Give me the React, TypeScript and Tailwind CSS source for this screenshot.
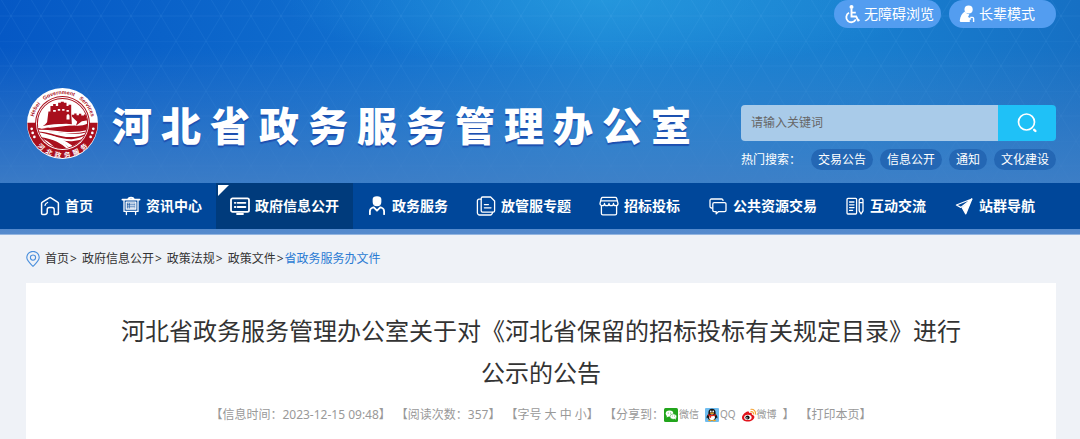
import React from 'react';

const strokeProps = {
    fill: 'none',
    stroke: 'currentColor',
    strokeWidth: 1.3,
    strokeLinecap: 'round' as const,
    strokeLinejoin: 'round' as const,
};

const NavIcon: React.FC<{ children: React.ReactNode }> = ({ children }) => (
    <svg viewBox="0 0 20 20" className="w-5 h-5 shrink-0" aria-hidden="true" {...strokeProps}>
        {children}
    </svg>
);

const HomeIcon = () => (
    <NavIcon>
        <path d="M5 18.4H2.6a1 1 0 0 1-1-1V7.6a1.6 1.6 0 0 1 .8-1.4l6.8-4.4a1.6 1.6 0 0 1 1.7 0l6.7 4.4a1.6 1.6 0 0 1 .8 1.4v9.8a1 1 0 0 1-1 1h-3.2v-4.6a2.2 2.2 0 0 0-2.2-2.2H9.4a2.2 2.2 0 0 0-2.2 2.2v2.4a2.2 2.2 0 0 1-2.2 2.2z" strokeWidth="1.5" />
        <path d="M5 9.4c.2-1.6 1-2.2 2.6-2.9" />
    </NavIcon>
);

const BoardIcon = () => (
    <NavIcon>
        <path d="M1.4 3.6h17.2M7.2 3.6c0-1.2.8-2 2.8-2s2.8.8 2.8 2" strokeWidth="1.8" />
        <path d="M3 4v11.4h14V4M5.2 6.2v7h9.6v-7z" />
        <path d="M7 7.8h.4M9 7.8h4.4M7 9.9h.4M9 9.9h4.4M7 12h.4M9 12h4.4M5.4 15.6v3M14.6 15.6v3" />
    </NavIcon>
);

const ScreenIcon = () => (
    <NavIcon>
        <rect x="1" y="2.4" width="18" height="13.4" rx="1.6" strokeWidth="1.8" />
        <path d="M4.8 6.8h.6M7.6 6.8h7.8M4.8 11h.6M7.6 11h7.8M7 18h6" strokeWidth="1.8" />
    </NavIcon>
);

const PersonIcon = () => (
    <NavIcon>
        <path d="M6.3 3.2c0-1.4 1-2 3.7-2.2 2.7.2 3.7.8 3.7 2.2V6c0 2.2-1.7 3.6-3.7 3.6S6.3 8.2 6.3 6z" fill="currentColor" />
        <path d="M2.9 18.2v-2.9c0-2 .8-3.2 3-3.8l.9-.2 3.2 3.4 3.2-3.4.9.2c2.2.6 3 1.8 3 3.8v2.9" strokeWidth="1.8" />
    </NavIcon>
);

const PagesIcon = () => (
    <NavIcon>
        <path d="M5.2 2.4v12.4a1.4 1.4 0 0 0 1.4 1.4h10.6a1.4 1.4 0 0 0 1.4-1.4V5l-4-4H6.6a1.4 1.4 0 0 0-1.4 1.4z" />
        <path d="M5 3.2H3a1.6 1.6 0 0 0-1.6 1.6v12A2.2 2.2 0 0 0 3.6 19h10.8c1 0 1.8-.8 2.2-2.6M8.4 8.6h4M8.4 11.8h6.6" />
    </NavIcon>
);

const ShopIcon = () => (
    <NavIcon>
        <path d="M3.6 1.4h12.8c.6 0 1 .3 1.2.8L19 7.4c0 1.4-1.1 2.3-2.3 2.3s-2.2-.9-2.2-2.3c0 1.4-1 2.3-2.25 2.3S10 8.8 10 7.4c0 1.4-1 2.3-2.25 2.3S5.5 8.8 5.5 7.4c0 1.4-1 2.3-2.2 2.3S1 8.8 1 7.4l1.4-5.2c.2-.5.6-.8 1.2-.8z" />
        <path d="M2.2 4.8h15.6M2.4 9.6v7.8a1.4 1.4 0 0 0 1.4 1.4h12.4a1.4 1.4 0 0 0 1.4-1.4V9.6" />
    </NavIcon>
);

const ChatIcon = () => (
    <NavIcon>
        <path d="M4 12h-.6A1.4 1.4 0 0 1 2 10.6V4.4A1.4 1.4 0 0 1 3.4 3h10.2A1.4 1.4 0 0 1 15 4.4" />
        <path d="M6.2 6.6h10.4A1.4 1.4 0 0 1 18 8v6.2a1.4 1.4 0 0 1-1.4 1.4h-6l-2.4 2.2v-2.2h-2a1.4 1.4 0 0 1-1.4-1.4V8a1.4 1.4 0 0 1 1.4-1.4z" />
    </NavIcon>
);

const NoteIcon = () => (
    <NavIcon>
        <rect x="2" y="2.4" width="9.6" height="15.6" rx="1" />
        <path d="M4.6 6H9M4.6 8.8H9M4.6 11.6H9M4.6 14.4h3M14.2 4.4a1.9 1.9 0 0 1 3.8 0v10.4L16.1 18l-1.9-3.2zM14.2 6.6H18" />
    </NavIcon>
);

const PlaneIcon = () => (
    <NavIcon>
        <path d="M17.8 3 2.4 9l4.4 2.4z" strokeWidth="1.2" />
        <path d="M17.8 3 8.4 12l3.4 5.8z" fill="currentColor" />
    </NavIcon>
);

const NAV_ITEMS = [
    { label: '首页', icon: <HomeIcon /> },
    { label: '资讯中心', icon: <BoardIcon /> },
    { label: '政府信息公开', icon: <ScreenIcon />, active: true },
    { label: '政务服务', icon: <PersonIcon /> },
    { label: '放管服专题', icon: <PagesIcon /> },
    { label: '招标投标', icon: <ShopIcon /> },
    { label: '公共资源交易', icon: <ChatIcon /> },
    { label: '互动交流', icon: <NoteIcon /> },
    { label: '站群导航', icon: <PlaneIcon /> },
];

const SITE_NAME = '河北省政务服务管理办公室';
const HOT_WORDS = ['交易公告', '信息公开', '通知', '文化建设'];
const CRUMBS = ['首页', '政府信息公开', '政策法规', '政策文件'];

// Round emblem: Great Wall tower inside a half white, half red ring
const Emblem = () => (
    <svg viewBox="0 0 212 212" className="w-[71px] h-[71px] shrink-0" role="img" aria-label="河北政务服务">
        <defs>
            <clipPath id="emblem-inner">
                <circle cx="106" cy="106" r="74" />
            </clipPath>
            <path id="emblem-top" d="M18 106a88 88 0 0 1 176 0" />
            <path id="emblem-bottom" d="M4 106a102 102 0 0 0 204 0" />
        </defs>
        <circle cx="106" cy="106" r="106" fill="#fff" />
        <path d="M1 104h210a105 105 0 0 1-210 0z" fill="#a90f1d" />
        <circle cx="106" cy="106" r="82" fill="#a90f1d" />
        <circle cx="106" cy="106" r="79" fill="#fff" />
        <circle cx="106" cy="106" r="75" fill="none" stroke="#a90f1d" strokeWidth="3" />
        <g clipPath="url(#emblem-inner)">
            <path
                d="M70 54h8v-6h8v6h7v-10h8v-3h9v3h8v10h6v-4h8v26l2 32c-22-4-46 0-70 10l-36 6c14-6 26-14 32-22l4-32h6z"
                fill="#a90f1d"
            />
            <path d="M134 80h7v-4h7v5h7v-4h7v5h8v-3h20v16l-26 4-18 14 4-12-8-8-8-8z" fill="#a90f1d" />
            <path d="M26 120c40 2 92-10 116-8 14 2 30 0 46-10v26c-30 14-64 8-92 4-28-4-50-4-70-2z" fill="#a90f1d" />
            <path d="M30 118c36-10 70-14 112-6-30-2-64 2-98 10z" fill="#fff" />
            <path d="M26 130c36 0 58 12 90 16 26 2 48-2 70-14l-8 26-34 22c-30-28-72-42-118-44z" fill="#a90f1d" />
            <path d="M30 144c46 4 82 18 108 44H88c-8-18-30-34-58-44z" fill="#a90f1d" />
            <path d="M34 136c34 2 60 22 100 20 20-2 36-8 50-16" fill="none" stroke="#fff" strokeWidth="6" />
            <path d="M34 127c42-4 86 16 148 0" fill="none" stroke="#fff" strokeWidth="4" />
            <path d="M38 143c44 6 66 18 92 44" fill="none" stroke="#fff" strokeWidth="6" />
        </g>
        <g fill="#fff">
            <path d="M78 66h8v5h-8zM92 63h7v5h-7zM105 63h7v5h-7zM118 66h7v5h-7zM118 84c0-7 9-7 9 0v10h-9z" />
            <circle cx="14" cy="122" r="4" />
            <circle cx="17" cy="134" r="4" />
            <circle cx="22" cy="146" r="4" />
            <circle cx="198" cy="122" r="4" />
            <circle cx="195" cy="134" r="4" />
            <circle cx="190" cy="146" r="4" />
        </g>
        <text fill="#a90f1d" fontSize="16" fontWeight="700" fontFamily="'Liberation Sans', sans-serif" textAnchor="middle">
            <textPath href="#emblem-top" startOffset="50%">Hebei&#8195;Government&#8195;Services</textPath>
        </text>
        <text fill="#fff" fontSize="20" fontWeight="700" fontFamily="'Noto Sans CJK SC', sans-serif" textAnchor="middle">
            <textPath href="#emblem-bottom" startOffset="50%">河&#8194;北&#8194;政&#8194;务&#8194;服&#8194;务</textPath>
        </text>
    </svg>
);

const HeaderBackdrop = () => (
    <svg className="absolute inset-0 w-full h-full" aria-hidden="true">
        <defs>
            <linearGradient id="base" x1="0" y1="0" x2="1" y2="0">
                <stop offset="0" stopColor="#0558c5" />
                <stop offset="0.3" stopColor="#0f6ccd" />
                <stop offset="0.56" stopColor="#1b83d4" />
                <stop offset="0.8" stopColor="#187ecf" />
                <stop offset="1" stopColor="#1670c4" />
            </linearGradient>
            <radialGradient id="glow" cx="0.56" cy="0" r="0.3">
                <stop offset="0" stopColor="#2aa3e2" stopOpacity="0.6" />
                <stop offset="1" stopColor="#2aa3e2" stopOpacity="0" />
            </radialGradient>
            <linearGradient id="fade" x1="0" y1="0" x2="0" y2="1">
                <stop offset="0.2" stopColor="#4380c6" stopOpacity="0" />
                <stop offset="0.78" stopColor="#4380c6" stopOpacity="0.85" />
                <stop offset="1" stopColor="#568bcd" />
            </linearGradient>
            <pattern id="mesh" width="30" height="50" patternUnits="userSpaceOnUse" patternTransform="translate(-4 -9)">
                <path d="M0 0h30M0 25h30M0 0l30 50M30 0 0 50" fill="none" stroke="#7cc8ff" strokeOpacity="0.07" />
            </pattern>
        </defs>
        <rect width="100%" height="100%" fill="url(#base)" />
        <rect width="100%" height="100%" fill="url(#glow)" />
        <rect width="100%" height="100%" fill="url(#mesh)" />
        <rect width="100%" height="100%" fill="url(#fade)" />
    </svg>
);

const WheelchairIcon = () => (
    <svg viewBox="0 0 16 20" className="w-4 h-5 shrink-0" fill="none" stroke="currentColor" aria-hidden="true">
        <circle cx="7.5" cy="3" r="2" fill="currentColor" stroke="none" />
        <path d="M7.5 5v7.5h4.7l2 4 1.3-.6M7.5 8.6h4.3" strokeWidth="1.9" />
        <path d="M5 8.8a5 5 0 1 0 6.8 6.6" strokeWidth="1.8" />
    </svg>
);

const ElderIcon = () => (
    <svg viewBox="0 0 16 20" className="w-4 h-5 shrink-0" aria-hidden="true">
        <circle cx="9.6" cy="5.5" r="4.1" fill="currentColor" />
        <path d="M6 7.6c1 1.6 2.4 2.6 4.4 2.7l-1.4 2.6 3.2 1.5v1.2l-1.4.2V18H2.2C1.200 18 .6 17.400.8 16.200 1.300 12.400 3 9.400 6 7.600z" fill="currentColor" />
        <path d="M11.200 13.400h2.200c.8 0 1.200.5 1.200 1.200V18" fill="none" stroke="currentColor" strokeWidth="1.4" />
    </svg>
);

const WechatIcon = () => (
    <svg viewBox="0 0 14 14" className="w-[14px] h-[14px]" aria-hidden="true">
        <rect width="14" height="14" rx="1.5" fill="#22a51c" />
        <ellipse cx="5.5" cy="5.6" rx="3.8" ry="3.1" fill="#fff" />
        <path d="m3 7.6-.4 2 2-1.2z" fill="#fff" />
        <ellipse cx="9.3" cy="8.6" rx="3.3" ry="2.7" fill="#fff" stroke="#22a51c" strokeWidth="0.5" />
        <path d="m10.4 10.6 1.5 1.2-.3-2z" fill="#fff" />
        <g fill="#22a51c">
            <circle cx="4.2" cy="4.9" r="0.5" />
            <circle cx="6.7" cy="4.9" r="0.5" />
            <circle cx="8.2" cy="8" r="0.45" />
            <circle cx="10.4" cy="8" r="0.45" />
        </g>
    </svg>
);

const QQIcon = () => (
    <svg viewBox="0 0 14 14" className="w-[14px] h-[14px]" aria-hidden="true">
        <rect width="14" height="14" rx="1" fill="#6fbdf0" />
        <path d="M7 .8c2.3 0 3.6 1.6 3.6 3.8v1.2c1 1.2 2 2.8 1.8 4.2-.1.7-.7.4-1.2-.4-.1 2-1.7 3-4.2 3S2.9 11.6 2.8 9.6c-.5.8-1.1 1.1-1.2.4-.2-1.4.8-3 1.8-4.2V4.6C3.4 2.4 4.7.8 7 .8z" fill="#171717" />
        <ellipse cx="7" cy="9.3" rx="2.9" ry="2.9" fill="#fff" />
        <ellipse cx="5.8" cy="3.5" rx="0.8" ry="1.1" fill="#fff" />
        <ellipse cx="8.2" cy="3.5" rx="0.8" ry="1.1" fill="#fff" />
        <ellipse cx="7" cy="5.3" rx="2.2" ry="0.7" fill="#f5a21b" />
        <path d="M3.3 6c2 1.3 5.4 1.3 7.4 0l.4 1.2c-1.6.9-3.2 1.2-5 1.1v1.5H4.5V7.9c-.6-.2-1.1-.4-1.6-.7z" fill="#e5251c" />
        <path d="M3 12.6c0-1 3.6-1 3.8 0 .1.9-3.7.9-3.8 0zM7.2 12.6c0-1 3.6-1 3.8 0 .1.9-3.7.9-3.8 0z" fill="#f5a21b" />
    </svg>
);

const WeiboIcon = () => (
    <svg viewBox="0 0 14 14" className="w-[14px] h-[14px]" aria-hidden="true">
        <path d="M5.6 3.6c1-.4 1.8.1 1.5 1.5 1.6-.6 3.2-.4 2.7 1.3 1.3.4 2.7 1.2 2.6 2.7-.2 2.7-3.2 4.5-6.5 4.5-3.2 0-5.9-1.6-5.9-4.1 0-2.2 2.9-5.2 5.6-5.9z" fill="#e2141c" />
        <ellipse cx="5.9" cy="9.4" rx="3.7" ry="2.6" fill="#fff" />
        <circle cx="5.5" cy="9.5" r="2.1" fill="#111" />
        <circle cx="4.9" cy="9.9" r="0.7" fill="#fff" />
        <path d="M9 3.6c1.7-.2 2.7.9 2.4 2.4M9 1.3c3-.3 5 2 4.3 4.9" fill="none" stroke="#f5a63b" strokeWidth="1.2" strokeLinecap="round" />
    </svg>
);

const PinIcon = () => (
    <svg viewBox="0 0 14 16" className="w-[14px] h-4 shrink-0 text-[#4a8fdc]" aria-hidden="true" fill="none" stroke="currentColor" strokeWidth="1.1">
        <path d="M7 15.3C4 12.4.8 9.8.8 6.6a6.2 6.2 0 0 1 12.4 0c0 3.2-3.2 5.8-6.2 8.7z" />
        <circle cx="7" cy="6.6" r="2.6" />
    </svg>
);

const SHARES = [
    { label: '微信', icon: <WechatIcon /> },
    { label: 'QQ', icon: <QQIcon /> },
    { label: '微博', icon: <WeiboIcon /> },
];

const App: React.FC = () => {
    return (
        <div className="min-h-screen bg-[#eff2f7] font-['Noto_Sans','Noto_Sans_CJK_SC',sans-serif] text-xs text-[#333]">
            <header className="relative pb-[5px] border-b border-[#93b5e0]">
                <HeaderBackdrop />
                <div className="relative px-6 pb-[13px]">
                    <div className="flex justify-end gap-2 text-sm text-white">
                        <button className="h-7 w-[107px] pl-[10px] flex items-center gap-1 rounded-full bg-[#539df0] whitespace-nowrap">
                            <WheelchairIcon />
                            无障碍浏览
                        </button>
                        <button className="h-7 w-[107px] pl-[10px] flex items-center gap-1 rounded-full bg-[#539df0] whitespace-nowrap">
                            <ElderIcon />
                            长辈模式
                        </button>
                    </div>

                    <div className="mt-[60px] pl-[3px] flex justify-between items-start">
                        <div className="flex items-center gap-[14px]">
                            <Emblem />
                            <h1
                                aria-label={SITE_NAME}
                                className="flex gap-[9px] text-[40px] leading-none font-black text-white font-['Noto_Sans_CJK_SC',sans-serif] [text-shadow:0_2px_1px_#1d4fb0]"
                            >
                                {SITE_NAME.split('').map((ch, i) => (
                                    <span key={i}>{ch}</span>
                                ))}
                            </h1>
                        </div>

                        <div className="mt-[17px] w-[315px] shrink-0">
                            <form className="flex h-9 rounded-sm overflow-hidden" onSubmit={e => e.preventDefault()}>
                                <input
                                    type="text"
                                    aria-label="请输入关键词"
                                    placeholder="请输入关键词"
                                    className="flex-1 min-w-0 bg-[#a9cbe9] px-[10px] text-xs text-[#444] placeholder:text-[#666] outline-none"
                                />
                                <button aria-label="搜索" className="w-[58px] bg-[#1fc1f7] text-white flex items-center justify-center">
                                    <svg viewBox="0 0 20 20" className="w-5 h-5" fill="none" stroke="currentColor" strokeLinecap="round">
                                        <circle cx="9.5" cy="9" r="8" strokeWidth="1.7" />
                                        <path d="m17.2 16.8 1.2 1.2" strokeWidth="2.4" />
                                    </svg>
                                </button>
                            </form>
                            <div className="mt-2 flex justify-between items-center text-white">
                                <span>热门搜索：</span>
                                <div className="flex gap-[7px]">
                                    {HOT_WORDS.map(word => (
                                        <a key={word} href="#" className="h-[21px] px-[7px] flex items-center rounded-full bg-[#2467b4]">
                                            {word}
                                        </a>
                                    ))}
                                </div>
                            </div>
                        </div>
                    </div>
                </div>

                <nav className="relative flex pl-[26px] h-[46px] bg-[#00479a] text-sm font-bold text-white">
                    {NAV_ITEMS.map(item => (
                        <a
                            key={item.label}
                            href="#"
                            className={`relative flex items-center gap-[5px] px-[14px] whitespace-nowrap ${item.active ? 'bg-[#003b7c]' : ''}`}
                        >
                            {item.active && (
                                <svg viewBox="0 0 11 11" className="absolute left-0.5 top-0.5 w-[11px] h-[11px]" aria-hidden="true">
                                    <path d="M0 0h11L0 11z" fill="#fff" />
                                </svg>
                            )}
                            {item.icon}
                            {item.label}
                        </a>
                    ))}
                </nav>
            </header>

            <main className="pl-[26px] pr-6">
                {/* Breadcrumb */}
                <div className="flex items-center gap-[5px] h-12">
                    <PinIcon />
                    <div className="flex gap-[5px]">
                        {CRUMBS.map((crumb, i) => (
                            <span key={crumb} className="flex gap-px">
                                <a href="#">{crumb}</a>
                                <span>&gt;</span>
                                {i === CRUMBS.length - 1 && (
                                    <a href="#" className="text-[#2b7bd3]">省政务服务办文件</a>
                                )}
                            </span>
                        ))}
                    </div>
                </div>

                {/* Article */}
                <article className="bg-white px-[90px] pt-[27px] pb-4 text-center">
                    <h2 className="text-2xl leading-[42px]">
                        河北省政务服务管理办公室关于对《河北省保留的招标投标有关规定目录》进行公示的公告
                    </h2>
                    <div className="mt-[11px] h-5 flex justify-center items-center gap-[5px] text-[#999] whitespace-nowrap">
                        <span>【信息时间：2023-12-15 09:48】</span>
                        <span>【阅读次数：357】</span>
                        <span>
                            【字号 <a href="#">大</a> <a href="#">中</a> <a href="#">小</a>】
                        </span>
                        <span className="flex items-center">
                            【分享到：
                            <span className="flex gap-[6px] text-[10px]">
                                {SHARES.map(share => (
                                    <a key={share.label} href="#" className="flex items-center gap-px">
                                        {share.icon}
                                        {share.label}
                                    </a>
                                ))}
                            </span>
                            <span className="ml-[6px]">】</span>
                        </span>
                        <span>
                            【<a href="#">打印本页</a>】
                        </span>
                    </div>
                </article>
            </main>
        </div>
    );
};

export default App;
